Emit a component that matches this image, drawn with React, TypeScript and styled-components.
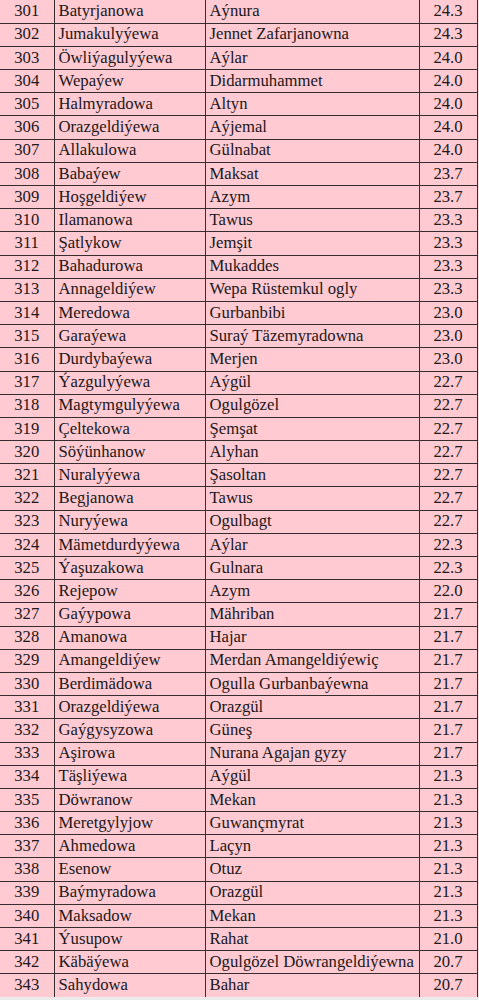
import styled, { createGlobalStyle } from 'styled-components';

const GlobalStyle = createGlobalStyle`
	html, body {
		margin: 0;
		padding: 0;
		background: #ecebeb;
	}
`;

type Row = [number, string, string, string];

const rows: Row[] = [
	[301, 'Batyrjanowa', 'Aýnura', '24.3'],
	[302, 'Jumakulyýewa', 'Jennet Zafarjanowna', '24.3'],
	[303, 'Öwliýagulyýewa', 'Aýlar', '24.0'],
	[304, 'Wepaýew', 'Didarmuhammet', '24.0'],
	[305, 'Halmyradowa', 'Altyn', '24.0'],
	[306, 'Orazgeldiýewa', 'Aýjemal', '24.0'],
	[307, 'Allakulowa', 'Gülnabat', '24.0'],
	[308, 'Babaýew', 'Maksat', '23.7'],
	[309, 'Hoşgeldiýew', 'Azym', '23.7'],
	[310, 'Ilamanowa', 'Tawus', '23.3'],
	[311, 'Şatlykow', 'Jemşit', '23.3'],
	[312, 'Bahadurowa', 'Mukaddes', '23.3'],
	[313, 'Annageldiýew', 'Wepa Rüstemkul ogly', '23.3'],
	[314, 'Meredowa', 'Gurbanbibi', '23.0'],
	[315, 'Garaýewa', 'Suraý Täzemyradowna', '23.0'],
	[316, 'Durdybaýewa', 'Merjen', '23.0'],
	[317, 'Ýazgulyýewa', 'Aýgül', '22.7'],
	[318, 'Magtymgulyýewa', 'Ogulgözel', '22.7'],
	[319, 'Çeltekowa', 'Şemşat', '22.7'],
	[320, 'Söýünhanow', 'Alyhan', '22.7'],
	[321, 'Nuralyýewa', 'Şasoltan', '22.7'],
	[322, 'Begjanowa', 'Tawus', '22.7'],
	[323, 'Nuryýewa', 'Ogulbagt', '22.7'],
	[324, 'Mämetdurdyýewa', 'Aýlar', '22.3'],
	[325, 'Ýaşuzakowa', 'Gulnara', '22.3'],
	[326, 'Rejepow', 'Azym', '22.0'],
	[327, 'Gaýypowa', 'Mähriban', '21.7'],
	[328, 'Amanowa', 'Hajar', '21.7'],
	[329, 'Amangeldiýew', 'Merdan Amangeldiýewiç', '21.7'],
	[330, 'Berdimädowa', 'Ogulla Gurbanbaýewna', '21.7'],
	[331, 'Orazgeldiýewa', 'Orazgül', '21.7'],
	[332, 'Gaýgysyzowa', 'Güneş', '21.7'],
	[333, 'Aşirowa', 'Nurana Agajan gyzy', '21.7'],
	[334, 'Täşliýewa', 'Aýgül', '21.3'],
	[335, 'Döwranow', 'Mekan', '21.3'],
	[336, 'Meretgylyjow', 'Guwançmyrat', '21.3'],
	[337, 'Ahmedowa', 'Laçyn', '21.3'],
	[338, 'Esenow', 'Otuz', '21.3'],
	[339, 'Baýmyradowa', 'Orazgül', '21.3'],
	[340, 'Maksadow', 'Mekan', '21.3'],
	[341, 'Ýusupow', 'Rahat', '21.0'],
	[342, 'Käbäýewa', 'Ogulgözel Döwrangeldiýewna', '20.7'],
	[343, 'Sahydowa', 'Bahar', '20.7'],
];

// column widths measured off the scan
const widths = [54, 151, 214, 58];

export default function App() {
	return (
		<>
			<GlobalStyle />
			<Sheet>
				<Table>
					<colgroup>
						{widths.map((w, i) => (
							<col key={i} style={{ width: w }} />
						))}
					</colgroup>
					<tbody>
						{rows.map(([no, surname, name, score]) => (
							<Tr key={no}>
								<Cell $align='center'>{no}</Cell>
								<Cell>{surname}</Cell>
								<Cell>{name}</Cell>
								<Cell $align='center' $last>
									{score}
								</Cell>
							</Tr>
						))}
					</tbody>
				</Table>
			</Sheet>
		</>
	);
}

const Sheet = styled.div`
	width: 479px;
	padding-bottom: 2px;
	background: linear-gradient(to right, #ffcad2 477px, #ffe3e6 477px);
	background-clip: content-box;
`;

const Table = styled.table`
	width: 477px;
	border-collapse: collapse;
	table-layout: fixed;
	background: #ffcad2;
	font-family: 'Liberation Serif', 'Times New Roman', serif;
	font-size: 16.7px;
	color: #21181a;
`;

const Tr = styled.tr`
	height: 23.2px;
	border-bottom: 1.5px solid #362d2f;

	&:last-child {
		border-bottom: none;
	}
`;

const Cell = styled.td<{ $align?: 'left' | 'center'; $last?: boolean }>`
	padding: 0 0 0 ${(p) => (p.$align === 'center' ? '0' : '4px')};
	text-align: ${(p) => p.$align ?? 'left'};
	border-left: 1.5px solid #362d2f;
	border-right: ${(p) => (p.$last ? '1.5px solid #362d2f' : 'none')};
	white-space: nowrap;
	overflow: hidden;
	line-height: 1;

	&:first-child {
		border-left: none;
	}
`;
